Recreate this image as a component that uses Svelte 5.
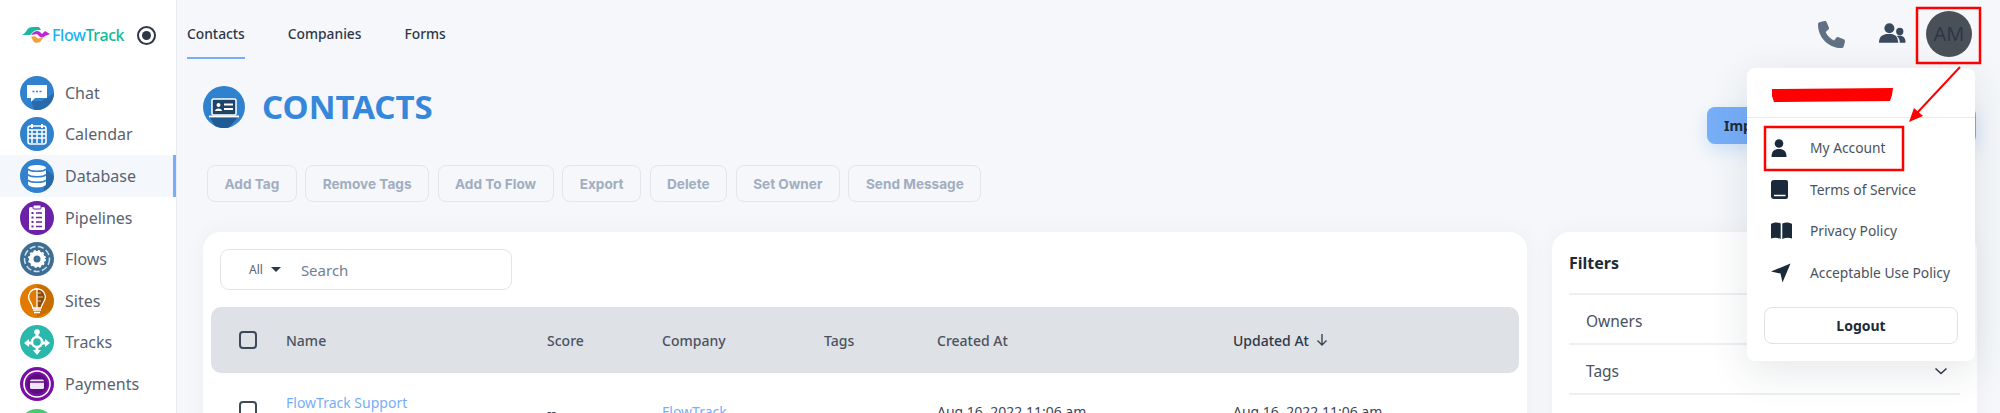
<script>
  const menu = [
    { icon: 'chat', name: 'Chat', color: '#3182ce' },
    { icon: 'calendar', name: 'Calendar', color: '#3182ce' },
    { icon: 'database', name: 'Database', color: '#3182ce', active: true },
    { icon: 'pipelines', name: 'Pipelines', color: '#6b21a8' },
    { icon: 'flows', name: 'Flows', color: '#3d6f94' },
    { icon: 'sites', name: 'Sites', color: '#e27a00' },
    { icon: 'tracks', name: 'Tracks', color: '#2bb8ac' },
    { icon: 'payments', name: 'Payments', color: '#7a0ea4' },
    { icon: 'none', name: '', color: '#48c774' }
  ];
  const tabs = ['Contacts', 'Companies', 'Forms'];
  const actions = ['Add Tag', 'Remove Tags', 'Add To Flow', 'Export', 'Delete', 'Set Owner', 'Send Message'];
  const columns = [
    { name: 'Name', width: 261 },
    { name: 'Score', width: 115 },
    { name: 'Company', width: 162 },
    { name: 'Tags', width: 113 },
    { name: 'Created At', width: 296 },
    { name: 'Updated At', width: 200 }
  ];
  const links = ['My Account', 'Terms of Service', 'Privacy Policy', 'Acceptable Use Policy'];
</script>

<div class="page">
  <nav class="sidebar">
    <div class="logo-area">
      <svg class="logo-mark" viewBox="0 0 28 16" aria-hidden="true">
        <path d="M0 8 C2 7 3 6 5 3 C6 1 8 0 11 0 H17 L19 3 C16 3 13 3 11 5 L8 8 Z" fill="#19b8a6" />
        <path d="M9 8 C12 4 15 3 18 5 L20 7 L23 4 L28 7 L23 9 C21 11 19 11 17 9 L15 7 C13 7 11 8 9 8 Z" fill="#c026d3" />
        <path d="M9 10 C11 9 13 9 14 10 C16 12 18 12 20 10 L21 11 L18 15 C16 16 13 16 12 15 Z" fill="#f59e3c" />
      </svg>
      <span class="brand"><span class="flow">Flow</span><span class="track">Track</span></span>
      <span class="pin"><span></span></span>
    </div>
    <ul class="nav-links">
      {#each menu as item}
        <li class="nav-item" class:active={item.active}>
          <svg class="nav-icon" viewBox="0 0 34 34" aria-hidden="true">
            <circle cx="17" cy="17" r="17" fill={item.color} />
            {#if item.icon === 'chat'}
              <path d="M11 25 L22 25 L34 17 A17 17 0 0 1 14 33.700 Z" fill="#2a6aa8" />
              <path d="M7 9 H27 V22 H15 L11 26 V22 H7 Z" fill="#fff" />
              <path d="M12.500 15.500h2M16 15.500h2M19.500 15.500h2" stroke="#3182ce" stroke-width="1.600" />
            {:else if item.icon === 'calendar'}
              <rect x="8" y="9" width="18" height="18" rx="2.500" fill="none" stroke="#fff" stroke-width="1.600" />
              <path d="M8 13h18M8 17h18M8 21h18M12 13v13M17 13v13M22 13v13" stroke="#fff" stroke-width="1.500" />
              <path d="M12 7v4M22 7v4" stroke="#fff" stroke-width="2" />
            {:else if item.icon === 'database'}
              <path d="M24 9 L34 17 A17 17 0 0 1 24 32 Z" fill="#2a6aa8" />
              <path d="M8 9 C8 5 26 5 26 9 V25 C26 29.500 8 29.500 8 25 Z" fill="#fff" />
              <path d="M8 10 C10 13 24 13 26 10M8 15.500 C10 18.500 24 18.500 26 15.500M8 21 C10 24 24 24 26 21" fill="none" stroke="#3182ce" stroke-width="1.500" />
            {:else if item.icon === 'pipelines'}
              <rect x="9" y="6" width="16" height="23" rx="1.500" fill="#fff" />
              <rect x="13" y="4" width="8" height="4" rx="1" fill="#fff" stroke="#6b21a8" />
              <path d="M16 12h6M16 16.500h6M16 21h6M16 25.500h6" stroke="#6b21a8" stroke-width="1.500" />
              <path d="M11.500 12h2M11.500 16.500h2M11.500 21h2M11.500 25.500h2" stroke="#6b21a8" stroke-width="2" />
            {:else if item.icon === 'flows'}
              <circle cx="17" cy="17" r="12.500" fill="none" stroke="#cfe0ec" stroke-width="1.500" stroke-dasharray="6 2.500" />
              <circle cx="17" cy="17" r="8" fill="#fff" />
              <circle cx="17" cy="17" r="7.500" fill="none" stroke="#fff" stroke-width="3" stroke-dasharray="2 2" />
              <circle cx="17" cy="17" r="3.500" fill="#3d6f94" />
            {:else if item.icon === 'sites'}
              <path d="M17 1 A16 16 0 0 1 30 27 L17 33 Z" fill="#a85a00" opacity=".45" />
              <path d="M17 5 C10 5 8 11 9 15 C10 18 12 20 13 24 H21 C22 20 24 18 25 15 C26 11 24 5 17 5 Z" fill="#8a4b08" stroke="#fff" stroke-width="1.300" />
              <path d="M17 5 C10 5 8 11 9 15 C10 18 12 20 13 24 H17 Z" fill="#e27a00" stroke="#fff" stroke-width="1.300" />
              <path d="M13 26h8M14 28.500h6" stroke="#fff" stroke-width="1.500" />
              <path d="M17 9h4M17 13h6M17 17h4" stroke="#f3c58c" stroke-width="1" />
            {:else if item.icon === 'tracks'}
              <path d="M17 7 V27 M7 18 H27" stroke="#fff" stroke-width="3" />
              <circle cx="17" cy="17" r="5" fill="#2bb8ac" stroke="#fff" stroke-width="2.500" />
              <circle cx="17" cy="7" r="2.800" fill="#fff" />
              <path d="M4 18 L9 14 V22 Z M30 18 L25 14 V22 Z M17 30 L13 25 H21 Z" fill="#fff" />
            {:else if item.icon === 'payments'}
              <circle cx="17" cy="17" r="13" fill="none" stroke="#fff" stroke-width="1.600" />
              <circle cx="17" cy="17" r="10" fill="#5e0b80" />
              <rect x="10" y="12.500" width="14" height="9.500" rx="1.500" fill="#f3e3f7" />
              <path d="M10 15h14" stroke="#5e0b80" stroke-width="1.500" />
            {/if}
          </svg>
          {#if item.name}<span class="nav-label">{item.name}</span>{/if}
        </li>
      {/each}
    </ul>
  </nav>

  <main class="main">
    <header class="topbar">
      <div class="tabs">
        {#each tabs as tab, i}
          <span class="tab" class:current={i === 0}>{tab}</span>
        {/each}
      </div>
      <div class="top-icons">
        <svg class="phone" viewBox="0 0 512 512" aria-hidden="true">
          <path d="M164.900 24.600c-7.700-18.600-28-28.500-47.400-23.200l-88 24C12.100 30.200 0 46 0 64 0 311.400 200.600 512 448 512c18 0 33.800-12.100 38.600-29.500l24-88c5.300-19.400-4.600-39.700-23.200-47.400l-96-40c-16.300-6.800-35.200-2.100-46.300 11.600L304.700 368C234.300 334.700 177.300 277.700 144 207.300l49.300-40.300c13.700-11.200 18.400-30 11.600-46.300l-40-96z" fill="#5f7183" />
        </svg>
        <svg class="people" viewBox="0 0 26 20" aria-hidden="true">
          <circle cx="10" cy="5" r="4.800" fill="#3a4a5c" />
          <path d="M0 19 C0 12 4 10.500 10 10.500 C16 10.500 18 13 18.500 19 Z" fill="#3a4a5c" />
          <circle cx="20" cy="8" r="3.500" fill="#3a4a5c" />
          <path d="M17 12.500 C21 11 26 13 25.500 19 H20 C20 16 19 14 17 12.500 Z" fill="#3a4a5c" />
        </svg>
        <div class="avatar">AM</div>
      </div>
    </header>

    <section class="title-row">
      <svg class="title-icon" viewBox="0 0 42 42" aria-hidden="true">
        <circle cx="21" cy="21" r="21" fill="#3182ce" />
        <path d="M6 30 H36 L26 41.500 A21 21 0 0 1 12 40 Z" fill="#1f5a94" />
        <rect x="9" y="13" width="24" height="16" rx="1.500" fill="#1e4468" stroke="#fff" stroke-width="1.500" />
        <path d="M6 30.500h30" stroke="#fff" stroke-width="1.800" />
        <circle cx="15.500" cy="19" r="2" fill="#fff" />
        <path d="M12 25 C12 21.500 19 21.500 19 25 Z" fill="#fff" />
        <path d="M21 18.500h9M21 23h9" stroke="#fff" stroke-width="2.200" />
      </svg>
      <h1>CONTACTS</h1>
      <button class="import">Import</button>
    </section>

    <div class="actions">
      {#each actions as action}
        <button class="action">{action}</button>
      {/each}
    </div>

    <div class="content">
      <section class="card table-card">
        <div class="search">
          <span class="all">All</span>
          <span class="caret"></span>
          <span class="search-text">Search</span>
        </div>
        <div class="table-head">
          <span class="check"></span>
          {#each columns as col}
            <span class="col" class:sorted={col.name === 'Updated At'} style="width: {col.width}px">
              {col.name}
              {#if col.name === 'Updated At'}
                <svg class="sort" viewBox="0 0 12 14" aria-hidden="true">
                  <path d="M6 1v11M1.500 7.500 6 12l4.500-4.500" fill="none" stroke="#3a4555" stroke-width="1.400" />
                </svg>
              {/if}
            </span>
          {/each}
        </div>
        <div class="table-row">
          <span class="check"></span>
          <span class="col link top" style="width: 261px">FlowTrack Support</span>
          <span class="col" style="width: 115px">--</span>
          <span class="col link" style="width: 162px">FlowTrack</span>
          <span class="col" style="width: 113px"></span>
          <span class="col" style="width: 296px">Aug 16, 2022 11:06 am</span>
          <span class="col" style="width: 200px">Aug 16, 2022 11:06 am</span>
        </div>
      </section>

      <aside class="card filters">
        <h2>Filters</h2>
        <div class="filter">Owners</div>
        <div class="filter">Tags
          <svg class="chevron" viewBox="0 0 14 8" aria-hidden="true">
            <path d="M1.500 1.500 7 6.500l5.500-5" fill="none" stroke="#2d3748" stroke-width="1.500" />
          </svg>
        </div>
      </aside>
    </div>
  </main>

  <div class="dropdown">
    <div class="account"></div>
    <ul class="links">
      {#each links as link, i}
        <li class="link-row">
          <span class="link-icon">
            {#if i === 0}
              <svg viewBox="0 0 16 18" width="16" height="18" aria-hidden="true">
                <circle cx="8" cy="4.500" r="4.300" fill="#1a2a3a" />
                <path d="M0.500 18 C0.500 12 3.500 10 8 10 C12.500 10 15.500 12 15.500 18 Z" fill="#1a2a3a" />
              </svg>
            {:else if i === 1}
              <svg viewBox="0 0 17 19" width="17" height="19" aria-hidden="true">
                <path d="M3 0 H15 A2 2 0 0 1 17 2 V17 A2 2 0 0 1 15 19 H3 A3 3 0 0 1 0 16 V3 A3 3 0 0 1 3 0 Z" fill="#1a2a3a" />
                <path d="M3 15.500 H14.500" stroke="#fff" stroke-width="1.500" />
              </svg>
            {:else if i === 2}
              <svg viewBox="0 0 21 17" width="21" height="17" aria-hidden="true">
                <path d="M0 2 C3 0 6.500 0 9.700 1.500 V17 C6.500 15.500 3 15.500 0 16.500 Z M21 2 C18 0 14.500 0 11.300 1.500 V17 C14.500 15.500 18 15.500 21 16.500 Z" fill="#1a2a3a" />
              </svg>
            {:else}
              <svg viewBox="0 0 20 20" width="20" height="20" aria-hidden="true">
                <path d="M0 8.500 L19.500 0.500 L11.500 19.500 L9.500 10.500 Z" fill="#1a2a3a" />
              </svg>
            {/if}
          </span>
          <span>{link}</span>
        </li>
      {/each}
    </ul>
    <button class="logout">Logout</button>
  </div>

  <svg class="annotations" viewBox="0 0 2000 413" aria-hidden="true">
    <rect x="1917" y="8" width="63" height="55" fill="none" stroke="#f00" stroke-width="2.500" />
    <rect x="1765" y="127" width="138" height="43" fill="none" stroke="#f00" stroke-width="2.500" />
    <path d="M1772 89 L1893 88 L1892 95 L1890 101 L1774 102 L1772 96 Z" fill="#f00" />
    <path d="M1960 67 L1917 113" stroke="#f00" stroke-width="2" />
    <path d="M1909 122 L1914 108 L1923 116 Z" fill="#f00" />
  </svg>
</div>

<style>
  :global(body) {
    margin: 0;
    overflow: hidden;
    background: #f5f7fa;
  }

  .page {
    position: relative;
    display: flex;
    width: 2000px;
    height: 413px;
    overflow: hidden;
    background: #f5f7fa;
    font-family: "Noto Sans", "Open Sans", sans-serif;
    color: #2d3748;
  }

  .sidebar {
    flex: none;
    width: 176px;
    height: 100%;
    background: #fff;
    border-right: 1px solid #e7eaee;
  }

  .logo-area {
    display: flex;
    align-items: center;
    height: 70px;
    padding-left: 22px;
  }

  .logo-mark {
    width: 28px;
    height: 16px;
    margin-right: 2px;
  }

  .brand {
    font-size: 16px;
    font-weight: 500;
    letter-spacing: -0.4px;
    width: 85px;
  }

  .flow { color: #18b4ef; }
  .track { color: #12b89a; }

  .pin {
    display: flex;
    align-items: center;
    justify-content: center;
    width: 15px;
    height: 15px;
    border: 2px solid #2d3748;
    border-radius: 50%;
  }

  .pin span {
    width: 9px;
    height: 9px;
    border-radius: 50%;
    background: #2d3748;
  }

  .nav-links {
    list-style: none;
    margin: 0;
    padding: 2px 0 0;
  }

  .nav-item {
    display: flex;
    align-items: center;
    gap: 11px;
    height: 41.600px;
    padding-left: 20px;
    box-sizing: border-box;
  }

  .nav-item.active {
    background: #f4f8fd;
    box-shadow: inset -3px 0 0 #76aef8;
  }

  .nav-icon {
    flex: none;
    width: 34px;
    height: 34px;
  }

  .nav-label {
    font-size: 16px;
    color: #5a6270;
  }

  .main {
    flex: 1;
    min-width: 0;
  }

  .topbar {
    display: flex;
    align-items: flex-start;
    justify-content: space-between;
    height: 69px;
  }

  .tabs {
    display: flex;
    gap: 43px;
    padding-left: 10px;
  }

  .tab {
    height: 59px;
    box-sizing: border-box;
    padding-top: 24px;
    font-size: 13.800px;
    font-weight: 500;
    color: #2d3748;
  }

  .tab.current {
    border-bottom: 2px solid #76aef8;
  }

  .top-icons {
    display: flex;
    align-items: center;
    gap: 22px;
    height: 68px;
    padding-right: 28px;
  }

  .phone { width: 27px; height: 27px; margin-right: 12px; }
  .people { width: 27px; height: 21px; margin-right: -2px; margin-top: -2px; }

  .avatar {
    width: 46px;
    height: 46px;
    border-radius: 50%;
    background: #4a5058;
    color: #2d3748;
    font-size: 20px;
    line-height: 46px;
    text-align: center;
  }

  .title-row {
    display: flex;
    align-items: flex-start;
    height: 96px;
    padding: 17px 24px 0 26px;
    box-sizing: border-box;
  }

  .title-icon {
    width: 42px;
    height: 42px;
    margin-right: 17px;
  }

  h1 {
    margin: 0;
    font-size: 33px;
    line-height: 42px;
    font-weight: 700;
    color: #3587dc;
  }

  .import {
    margin: 21px 0 0 auto;
    width: 269px;
    height: 37px;
    padding: 0 0 0 17px;
    border: 0;
    border-radius: 8px;
    background: #76aef8;
    box-shadow: 0 6px 16px rgba(118, 174, 248, 0.3);
    color: #1f2937;
    font: 700 14px "Noto Sans", sans-serif;
    text-align: left;
  }

  .actions {
    display: flex;
    gap: 8.500px;
    padding-left: 30px;
    height: 67px;
  }

  .action {
    height: 37px;
    padding: 0 16.500px;
    border: 1.500px solid #e2e5ea;
    border-radius: 8px;
    background: transparent;
    color: #a0aec0;
    font: 700 13.600px Inter, sans-serif;
  }

  .content {
    display: flex;
    gap: 25px;
    padding-left: 26px;
  }

  .card {
    background: #fff;
    border-radius: 18px;
    box-shadow: 0 0 24px rgba(45, 55, 72, 0.04);
  }

  .table-card {
    width: 1324px;
    height: 240px;
    padding: 17px 8px 0;
    box-sizing: border-box;
    flex: none;
  }

  .search {
    display: flex;
    align-items: center;
    width: 292px;
    height: 41px;
    margin-left: 9px;
    box-sizing: border-box;
    border: 1px solid #e2e5ea;
    border-radius: 9px;
  }

  .all {
    margin-left: 28px;
    font-size: 12px;
    color: #5a6270;
  }

  .caret {
    width: 0;
    height: 0;
    margin-left: 8px;
    border: 5px solid transparent;
    border-top: 5px solid #2d3748;
    border-bottom: 0;
  }

  .search-text {
    margin-left: 20px;
    font-size: 15px;
    color: #718096;
  }

  .table-head {
    display: flex;
    align-items: center;
    width: 1308px;
    height: 66px;
    margin-top: 17px;
    border-radius: 10px;
    background: #dee1e6;
    font-size: 14px;
    font-weight: 500;
    color: #4a5260;
  }

  .check {
    flex: none;
    width: 18px;
    height: 18px;
    margin: 0 29px 0 28px;
    box-sizing: border-box;
    border: 2px solid #3d4858;
    border-radius: 4px;
  }

  .col {
    flex: none;
    display: flex;
    align-items: center;
    gap: 7px;
  }

  .col.sorted {
    color: #2d3748;
  }

  .sort {
    width: 12px;
    height: 14px;
  }

  .table-row {
    display: flex;
    align-items: center;
    height: 76px;
    font-size: 14px;
    color: #3d4858;
  }

  .link {
    color: #76aef8;
  }

  .link.top {
    align-self: flex-start;
    margin-top: 20px;
  }

  .table-row .check {
    align-self: flex-start;
    margin-top: 28px;
  }

  .filters {
    flex: none;
    width: 425px;
    height: 240px;
    padding: 0 17px;
    box-sizing: border-box;
  }

  h2 {
    margin: 0;
    height: 63px;
    line-height: 63px;
    font-size: 16px;
    font-weight: 700;
    color: #1f2937;
    border-bottom: 2px solid #edf0f3;
    box-sizing: border-box;
  }

  .filter {
    position: relative;
    display: flex;
    align-items: center;
    height: 50px;
    padding: 3px 0 0 17px;
    font-size: 15.500px;
    color: #4a5260;
    border-bottom: 2px solid #edf0f3;
    box-sizing: border-box;
  }

  .chevron {
    position: absolute;
    right: 12px;
    top: 22px;
    width: 14px;
    height: 8px;
  }

  .dropdown {
    position: absolute;
    left: 1747px;
    top: 68px;
    width: 228px;
    height: 293px;
    border-radius: 8px;
    background: #fff;
    box-shadow: 0 10px 40px rgba(45, 55, 72, 0.12);
  }

  .account {
    height: 49px;
    border-bottom: 1px solid #e7eaee;
  }

  .links {
    list-style: none;
    margin: 0;
    padding: 9px 0 0;
  }

  .link-row {
    display: flex;
    align-items: center;
    height: 41.600px;
    padding-left: 24px;
    font-size: 13.800px;
    color: #4a5260;
  }

  .link-icon {
    display: flex;
    align-items: center;
    width: 39px;
  }

  .logout {
    display: block;
    width: 194px;
    height: 37px;
    margin: 14px 0 0 17px;
    border: 1px solid #dfe2e8;
    border-radius: 8px;
    background: #fff;
    color: #1f2937;
    font: 700 14px "Noto Sans", sans-serif;
  }

  .annotations {
    position: absolute;
    inset: 0;
    width: 2000px;
    height: 413px;
    pointer-events: none;
  }
</style>
